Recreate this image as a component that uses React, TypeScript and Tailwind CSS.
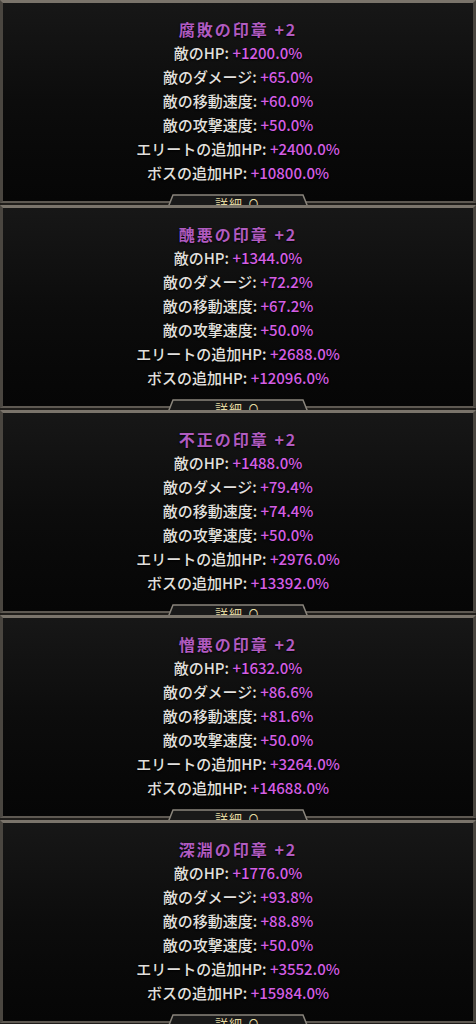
import React from "react";

type Seal = { name: string; hp: string; dmg: string; move: string; atk: string; elite: string; boss: string };

const seals: Seal[] = [
    { name: "腐敗の印章", hp: "+1200.0%", dmg: "+65.0%", move: "+60.0%", atk: "+50.0%", elite: "+2400.0%", boss: "+10800.0%" },
    { name: "醜悪の印章", hp: "+1344.0%", dmg: "+72.2%", move: "+67.2%", atk: "+50.0%", elite: "+2688.0%", boss: "+12096.0%" },
    { name: "不正の印章", hp: "+1488.0%", dmg: "+79.4%", move: "+74.4%", atk: "+50.0%", elite: "+2976.0%", boss: "+13392.0%" },
    { name: "憎悪の印章", hp: "+1632.0%", dmg: "+86.6%", move: "+81.6%", atk: "+50.0%", elite: "+3264.0%", boss: "+14688.0%" },
    { name: "深淵の印章", hp: "+1776.0%", dmg: "+93.8%", move: "+88.8%", atk: "+50.0%", elite: "+3552.0%", boss: "+15984.0%" },
];

const font = { fontFamily: '"Noto Sans CJK JP", "Noto Sans", sans-serif' };

function Row(props: { label: string; value: string }) {
    return (
        <p className="h-[24px] leading-[24px] text-[15px] font-medium text-[#e2e0de] [text-shadow:0_1px_2px_#000]">
            {props.label}: <span className="text-[#d45ee4]">{props.value}</span>
        </p>
    );
}

// tab sits on the bottom edge, its lower half hidden under the next panel
function Tab() {
    return (
        <div className="absolute left-1/2 -translate-x-1/2 top-[194px] w-[144px] h-[11px] overflow-hidden z-10">
            <svg className="absolute inset-0" width="144" height="16" viewBox="0 0 144 16">
                <polygon points="1,16 7,1 137,1 143,16" fill="#191919" stroke="#8a857c" strokeWidth="1.5" />
            </svg>
            <p className="relative text-center text-[13px] leading-[15px] pt-[2px] text-[#e4daa2] tracking-[1px]">詳細 ∩</p>
        </div>
    );
}

function Panel(props: { seal: Seal }) {
    const s = props.seal;
    return (
        <div className="relative h-[205px] shrink-0">
            <div className="relative h-[203px] border-t-[3px] border-t-[#7a746b] border-x-[3px] border-x-[#4a4640] border-b-[2px] border-b-[#5e5952] bg-gradient-to-b from-[#171717] via-[#0c0c0c] to-[#060606] flex flex-col items-center pt-[14px]">
                <h2 className="h-[24px] leading-[24px] text-[16px] font-bold tracking-[2px] text-[#b05bc0] [text-shadow:0_1px_2px_#000]">
                    {s.name} +2
                </h2>
                <Row label="敵のHP" value={s.hp} />
                <Row label="敵のダメージ" value={s.dmg} />
                <Row label="敵の移動速度" value={s.move} />
                <Row label="敵の攻撃速度" value={s.atk} />
                <Row label="エリートの追加HP" value={s.elite} />
                <Row label="ボスの追加HP" value={s.boss} />
            </div>
            <Tab />
        </div>
    );
}

export default function App() {
    return (
        <div className="w-[476px] h-[1024px] overflow-hidden bg-[#201e1b]" style={font}>
            <div className="flex flex-col">
                {seals.map((s) => (
                    <Panel key={s.name} seal={s} />
                ))}
            </div>
        </div>
    );
}
